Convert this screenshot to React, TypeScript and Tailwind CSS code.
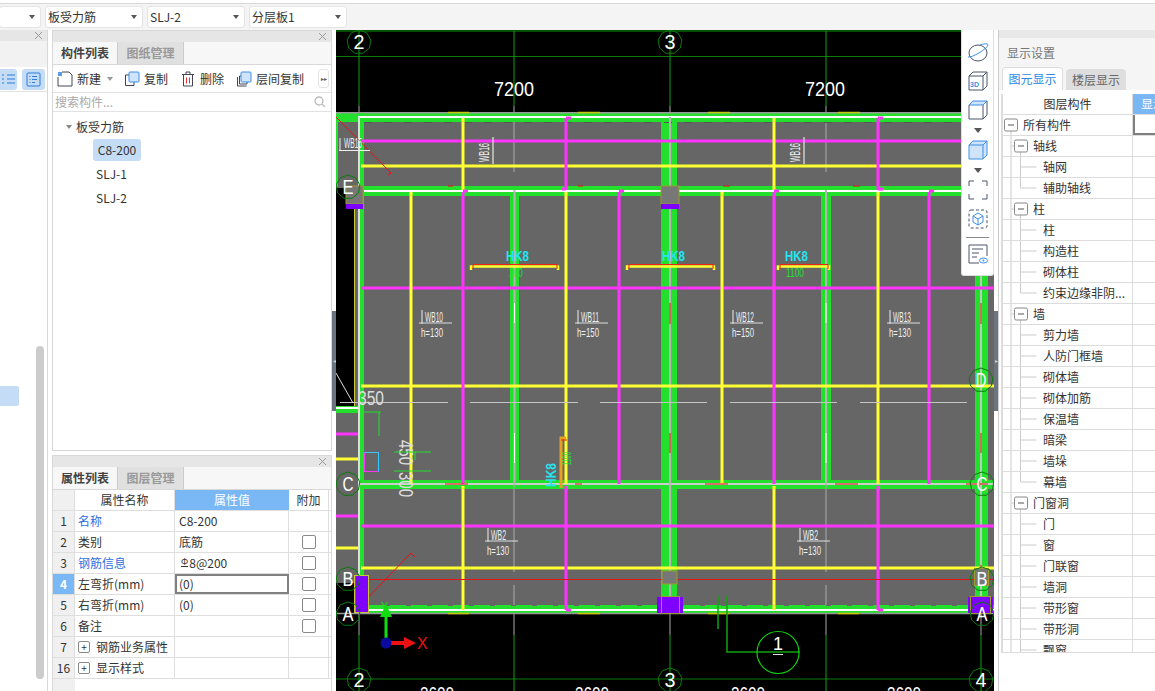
const GREEN = "#22e02c";
const AXIS = "#0b7a0b";
const PINK = "#ff33ff";
const YELLOW = "#ffff33";
const CYAN = "#22e5f0";

const sectionV = [
  { y1: 118, y2: 190, bars: [[463, YELLOW], [566, PINK], [774, YELLOW], [878, PINK]] },
  { y1: 192, y2: 484, bars: [[411, YELLOW], [463, PINK], [566, YELLOW], [619, PINK], [722, YELLOW], [774, PINK], [878, YELLOW], [929, PINK]] },
  { y1: 486, y2: 610, bars: [[463, YELLOW], [566, PINK], [774, YELLOW], [878, PINK]] },
] as const;

const hBars = [
  [141, PINK], [166, YELLOW], [288, PINK], [386, YELLOW], [526, PINK], [568, YELLOW],
] as const;

const bubbles = [
  ["2", 359, 42], ["3", 670, 42], ["E", 348, 187], ["C", 348, 484], ["B", 348, 579], ["A", 348, 614],
  ["D", 981, 380], ["C", 982, 484], ["B", 982, 579], ["A", 982, 614], ["2", 359, 680], ["3", 670, 680], ["4", 981, 680],
] as const;

const slabLabels = [
  ["WB10", "h=130", 433, 317], ["WB11", "h=150", 589, 317], ["WB12", "h=150", 744, 317], ["WB13", "h=130", 901, 317],
  ["WB2", "h=130", 499, 535], ["WB2", "h=130", 811, 535],
] as const;

function Bubble({ t, x, y }: { t: string; x: number; y: number }) {
  const pts = Array.from({ length: 9 }, (_, i) => {
    const a = (i / 9) * Math.PI * 2 - Math.PI / 2;
    return `${x + Math.cos(a) * 12},${y + Math.sin(a) * 12}`;
  }).join(" ");
  return (
    <g>
      <polygon points={pts} fill="none" stroke={AXIS} strokeWidth="1" />
      <text x={x} y={y + 7} textAnchor="middle" fontSize="20" fill="#fff" textLength="11" lengthAdjust="spacingAndGlyphs">{t}</text>
    </g>
  );
}

function SlabLabel({ a, b, x, y }: { a: string; b: string; x: number; y: number }) {
  return (
    <g fill="#eee">
      <line x1={x - 11} y1={y - 7} x2={x - 11} y2={y + 7} stroke="#eee" strokeWidth="1" />
      <line x1={x - 14} y1={y + 6} x2={x + 19} y2={y + 6} stroke="#ddd" strokeWidth="1" />
      <text x={x - 8} y={y + 5} fontSize="14" textLength={a.length > 3 ? 18 : 15} lengthAdjust="spacingAndGlyphs">{a}</text>
      <text x={x - 12} y={y + 20} fontSize="13" textLength={22} lengthAdjust="spacingAndGlyphs">{b}</text>
    </g>
  );
}

function Bracket({ x1, x2, label, num, tx }: { x1: number; x2: number; label: string; num: string; tx: number }) {
  return (
    <g>
      <path d={`M${x1} 270V266.500H${x2}V270`} fill="none" stroke={YELLOW} strokeWidth="2.500" />
      <path d={`M${x1 + 2} 269V264.500H${x2 - 1}V269`} fill="none" stroke="#ee2211" strokeWidth="1" />
      <text x={tx - 8} y={261} fontSize="14" fontWeight="700" fill={CYAN} textLength={23} lengthAdjust="spacingAndGlyphs">{label}</text>
      {num && (
        <text x={tx + 2} y={277} textAnchor="middle" fontSize="13" fill={GREEN} textLength={num.length * 4.500} lengthAdjust="spacingAndGlyphs">{num}</text>
      )}
    </g>
  );
}

function Canvas() {
  return (
    <svg width="658" height="661" viewBox="336 30 658 661" className="block font-['Liberation_Sans']">
      <rect x="336" y="30" width="658" height="661" fill="#000" />
      {/* slab fill */}
      <rect x="354" y="113" width="640" height="501" fill="#666" />
      <rect x="336" y="122" width="18" height="66" fill="#666" />
      <rect x="336" y="413" width="18" height="170" fill="#666" />

      {/* grid above and below the slab */}
      <line x1="336" y1="31" x2="994" y2="31" stroke="#0a9a0a" />
      <line x1="336" y1="56.5" x2="994" y2="56.5" stroke={AXIS} />
      <line x1="336" y1="679" x2="994" y2="679" stroke={AXIS} />
      {[359, 514, 670, 826, 981].map((x) => (
        <g key={x}>
          <line x1={x} y1="31" x2={x} y2="106" stroke="#0fa30f" />
          <line x1={x} y1="106" x2={x} y2="118" stroke="#aaa" />
          <line x1={x} y1="635" x2={x} y2="691" stroke="#0fa30f" />
          <line x1={x} y1="585" x2={x} y2="635" stroke="#aaa" />
        </g>
      ))}
      <line x1="514" y1="118" x2="514" y2="172" stroke="#aaa" />
      <line x1="826" y1="118" x2="826" y2="172" stroke="#aaa" />

      {/* walls */}
      <rect x="336" y="113" width="658" height="9" fill={GREEN} />
      <rect x="336" y="112" width="658" height="1.5" fill="#999" />
      <rect x="336" y="122" width="2" height="65" fill={GREEN} />
      <rect x="354" y="186" width="640" height="10" fill={GREEN} />
      <rect x="359" y="480" width="635" height="9" fill={GREEN} />
      <rect x="354" y="605" width="640" height="8" fill={GREEN} />
      <rect x="359" y="113" width="5" height="500" fill={GREEN} />
      <rect x="510" y="190" width="9" height="295" fill={GREEN} />
      <rect x="661" y="122" width="16" height="491" fill={GREEN} />
      <rect x="821" y="190" width="10" height="295" fill={GREEN} />
      <rect x="975" y="113" width="13" height="500" fill={GREEN} />
      <rect x="336" y="406" width="22" height="7" fill={GREEN} />
      <line x1="364" y1="122.5" x2="994" y2="122.5" stroke="#555" strokeDasharray="8 12" />
      <line x1="364" y1="605.5" x2="975" y2="605.5" stroke="#666" strokeDasharray="5 16" />

      {/* wall centre lines */}
      <line x1="358" y1="117" x2="994" y2="117" stroke="#fff" strokeWidth="2" />
      <line x1="364" y1="191" x2="994" y2="191" stroke="#fff" strokeWidth="2" />
      <line x1="336" y1="408" x2="358" y2="408" stroke="#fff" strokeWidth="2" />
      <line x1="359" y1="484" x2="994" y2="484" stroke="#ccc" strokeWidth="2" />
      <line x1="358" y1="610" x2="994" y2="610" stroke="#fff" strokeWidth="2" />
      <line x1="336" y1="613.5" x2="994" y2="613.5" stroke="#999" strokeWidth="1.5" />
      <line x1="359" y1="117" x2="359" y2="610" stroke="#ddd" strokeWidth="2" />
      <line x1="514.5" y1="190" x2="514.5" y2="484" stroke="#b5b5b5" strokeWidth="2" />
      <line x1="670" y1="117" x2="670" y2="610" stroke="#b5b5b5" strokeWidth="2" />
      <line x1="826" y1="190" x2="826" y2="484" stroke="#b5b5b5" strokeWidth="2" />
      <line x1="981" y1="113" x2="981" y2="613" stroke="#b5cdb5" strokeWidth="2" />
      <line x1="514.5" y1="303" x2="514.5" y2="323" stroke="#fff" />
      <line x1="514.5" y1="433" x2="514.5" y2="463" stroke="#fff" />
      <line x1="826" y1="303" x2="826" y2="323" stroke="#fff" />
      <line x1="826" y1="433" x2="826" y2="463" stroke="#fff" />
      <line x1="354.5" y1="190" x2="354.5" y2="406" stroke="#c8c83a" />
      <line x1="514" y1="484" x2="514" y2="572" stroke="#aaa" />
      <line x1="826" y1="484" x2="826" y2="572" stroke="#aaa" />

      {/* rebar */}
      {hBars.map(([y, c]) => (
        <line key={y} x1="361" y1={y} x2="994" y2={y} stroke={c} strokeWidth="3" />
      ))}
      {sectionV.map((s) =>
        s.bars.map(([x, c]) => (
          <line key={`${s.y1}-${x}`} x1={x} y1={s.y1} x2={x} y2={s.y2} stroke={c} strokeWidth="3" />
        )),
      )}
      <path d="M566 118h5M463 191h5M566 189h-4M619 191h5M774 191h5M878 118h5M878 189h5M929 191h5M566 610h5M878 610h5" stroke={PINK} strokeWidth="3" />
      <line x1="336" y1="434" x2="358" y2="434" stroke={PINK} strokeWidth="3" />
      <line x1="336" y1="459" x2="358" y2="459" stroke={YELLOW} strokeWidth="3" />
      <line x1="336" y1="516" x2="358" y2="516" stroke={PINK} strokeWidth="3" />
      <line x1="336" y1="548" x2="358" y2="548" stroke={YELLOW} strokeWidth="3" />

      {/* red marks */}
      <line x1="361" y1="579.5" x2="994" y2="579.5" stroke="#e81111" />
      <path d="M336 117L391 173L388 175" fill="none" stroke="#e81111" />
      <path d="M358 608L411 553L415 557" fill="none" stroke="#e81111" />
      <path d="M445 484h23M575 484h7M705 484h23M835 484h23M966 484h22M670 303v21M670 433v20M981 303v21M981 433v20M981 565v10M448 186h5M578 186h5M723 186h7M853 186h7" stroke="#e81111" />
      <path d="M448 112.5h21M578 112.5h22M708 112.5h22M838 112.5h22M448 613.5h21M578 613.5h22M708 613.5h21M838 613.5h21" stroke="#c8c800" strokeWidth="1.5" />

      {/* dashed axis through the slab */}
      <path d="M340 402.5h108M470 402.5h108M600 402.5h107M730 402.5h107M860 402.5h107" stroke="#c4c4c4" />
      <path d="M336 373L353 403" stroke="#ddd" />

      {/* columns */}
      <rect x="346" y="186" width="17" height="18" fill="#777" stroke="#9a9a30" />
      <rect x="346" y="204" width="17" height="5" fill="#8000ff" />
      <rect x="661" y="186" width="18" height="18" fill="#777" stroke="#9a9a30" />
      <rect x="661" y="204" width="18" height="5" fill="#8000ff" />
      <rect x="662" y="571" width="15" height="13" fill="#777" stroke="#9a9a30" />
      <rect x="974.5" y="568.500" width="14" height="17" fill="#777" stroke="#9a9a30" />
      <rect x="657" y="597" width="26" height="16" fill="#8000ff" />
      <rect x="661.500" y="596.500" width="18" height="17" fill="none" stroke="#9a9a30" />
      <rect x="968" y="597" width="25" height="16" fill="#8000ff" />
      <rect x="970.500" y="596.500" width="20" height="17" fill="none" stroke="#9a9a30" />
      <rect x="356" y="576" width="12" height="37" fill="#8000ff" />
      <rect x="354.5" y="575.5" width="14" height="37" fill="none" stroke="#c8c83a" />
      <rect x="364.5" y="452.5" width="14" height="19" fill="#666" stroke="#ff33ff" />
      <path d="M364.5 452.5h14v19" fill="none" stroke="#33ccff" />

      {/* text on the slab */}
      {slabLabels.map(([a, b, x, y]) => (
        <SlabLabel key={`${a}${x}`} a={a} b={b} x={x} y={y} />
      ))}
      <g fill="#eee">
        <path d="M340 138v12M339 150.500h31" stroke="#eee" />
        <text x="344" y="148" fontSize="14" textLength="18" lengthAdjust="spacingAndGlyphs">WB15</text>
        <path d="M493 137v27" stroke="#fff" />
        <text transform="translate(489 162) rotate(-90)" fontSize="14" textLength="19" lengthAdjust="spacingAndGlyphs">WB16</text>
        <path d="M804 137v27" stroke="#fff" />
        <text transform="translate(800 162) rotate(-90)" fontSize="14" textLength="19" lengthAdjust="spacingAndGlyphs">WB16</text>
      </g>
      <Bracket x1={471} x2={558} label="HK8" num="200" tx={514} />
      <Bracket x1={627} x2={714} label="HK8" num="" tx={670} />
      <Bracket x1={778} x2={829} label="HK8" num="1100" tx={793} />
      <path d="M561 488V438H566" fill="none" stroke="#e8a020" strokeWidth="3" />
      <path d="M561 440H567" stroke="#ee2211" />
      <text transform="translate(571 465) rotate(-90)" fontSize="13" fill={GREEN} textLength="13" lengthAdjust="spacingAndGlyphs">1100</text>
      <text transform="translate(556 487) rotate(-90)" fontSize="14" fontWeight="700" fill={CYAN} textLength="24" lengthAdjust="spacingAndGlyphs">HK8</text>

      <text x="358" y="405" fontSize="20" fill="#ddd" textLength="26" lengthAdjust="spacingAndGlyphs">350</text>
      <text transform="translate(399 440) rotate(90)" fontSize="20" fill="#ddd" textLength="25" lengthAdjust="spacingAndGlyphs">450</text>
      <text transform="translate(399 472) rotate(90)" fontSize="20" fill="#ddd" textLength="25" lengthAdjust="spacingAndGlyphs">300</text>
      <path d="M363 412h18M379 412v24M394 452h37M394 471h37M415 452v8" stroke={GREEN} />

      {/* dimensions */}
      <text x="514" y="96" textAnchor="middle" fontSize="20" fill="#fff" textLength="40" lengthAdjust="spacingAndGlyphs">7200</text>
      <text x="825" y="96" textAnchor="middle" fontSize="20" fill="#fff" textLength="40" lengthAdjust="spacingAndGlyphs">7200</text>
      {[437, 592, 748, 904].map((x) => (
        <text key={x} x={x} y="701" textAnchor="middle" fontSize="20" fill="#fff" textLength="34" lengthAdjust="spacingAndGlyphs">3600</text>
      ))}

      {bubbles.map(([t, x, y], i) => (
        <Bubble key={i} t={t} x={x} y={y} />
      ))}

      {/* section mark */}
      <path d="M718 596v33M727 596v56H800" fill="none" stroke="#0fa30f" strokeWidth="1.5" />
      <circle cx="778" cy="652.5" r="21" fill="none" stroke="#0fd00f" strokeWidth="1.2" />
      <text x="778" y="650" textAnchor="middle" fontSize="18" fill="#fff">1</text>
      <line x1="773" y1="654.5" x2="783" y2="654.5" stroke="#ddd" />

      {/* UCS */}
      <rect x="384.5" y="616" width="3" height="22" fill="#11dd11" />
      <path d="M380 617L386 604L392 617Z" fill="#11dd11" />
      <rect x="390" y="641" width="16" height="4" fill="#ee1111" />
      <path d="M404 637L416 643L404 649Z" fill="#ee1111" />
      <circle cx="386" cy="643" r="5.5" fill="#0a0aa0" />
      <text x="417" y="649" fontSize="16" fill="#ee1111">X</text>
      <text x="381" y="610" fontSize="11" fill="#11dd11">Y</text>
    </svg>
  );
}

function Close() {
  return (
    <svg width="9" height="9" viewBox="0 0 9 9" stroke="#999" className="mr-[4px]">
      <path d="M1 1l7 7M8 1L1 8" />
    </svg>
  );
}

function PanelHead() {
  return (
    <div className="flex h-[11px] shrink-0 items-center justify-end bg-[#e6e6e6]">
      <Close />
    </div>
  );
}

function Tabs({ a, b }: { a: string; b: string }) {
  return (
    <div className="flex h-[23px] shrink-0 border-b border-[#d8d8d8] bg-[#f7f7f7]">
      <div className="flex w-[65px] items-center justify-center border-r border-[#ccc] text-[12px] font-bold text-[#444]">{a}</div>
      <div className="flex w-[66px] items-center justify-center border-r border-[#ccc] bg-[#e0e0e0] text-[12px] font-bold text-[#999]">{b}</div>
    </div>
  );
}

function Select({ w, text }: { w: string; text?: string }) {
  return (
    <div className={`flex h-[22px] items-center justify-between rounded-[3px] border border-[#e4e4e4] bg-white pl-[2px] pr-[5px] text-[12px] text-[#333] ${w}`}>
      <span>{text}</span>
      <span className="h-0 w-0 border-x-[3px] border-t-[4px] border-x-transparent border-t-[#555]" />
    </div>
  );
}

function CopyIcon({ stacked }: { stacked?: boolean }) {
  return (
    <svg width="16" height="16" viewBox="0 0 16 16" fill="none">
      {stacked && <path d="M1.500 6v9h9" stroke="#445" />}
      <path d={stacked ? "M5 5H3.500v8H11v-2" : "M5 4H1.500v10.500H10V11"} stroke="#445" />
      <rect x="5" y="1" width="10" height="10" rx="1" fill="#cfe3fa" stroke="#3d8fe6" />
    </svg>
  );
}

function ToolBar() {
  return (
    <div className="flex h-[28px] shrink-0 items-center whitespace-nowrap border-b border-[#e2e2e2] bg-white pl-[4px] text-[12px] text-[#333]">
      <svg width="16" height="16" viewBox="0 0 16 16" fill="none" className="shrink-0">
        <path d="M1 6v9h14V4l-3-3H5" stroke="#445" />
        <rect x="1" y="1" width="4" height="4" fill="#5a9be6" />
      </svg>
      <span className="ml-[4px]">新建</span>
      <span className="ml-[6px] h-0 w-0 border-x-[3px] border-t-[4px] border-x-transparent border-t-[#999]" />
      <span className="ml-[11px] flex shrink-0"><CopyIcon /></span>
      <span className="ml-[4px]">复制</span>
      <span className="ml-[13px] flex shrink-0">
        <svg width="14" height="16" viewBox="0 0 14 16" fill="none" stroke="#445">
          <path d="M1 3.500h12M5 3V1h4v2M2.500 3.500V15h9V3.500" />
          <path d="M5.500 6.500v6M8.500 6.500v6" stroke="#e33" />
        </svg>
      </span>
      <span className="ml-[5px]">删除</span>
      <span className="ml-[12px] flex shrink-0"><CopyIcon stacked /></span>
      <span className="ml-[4px]">层间复制</span>
      <span className="ml-[14px] flex h-[19px] w-[11px] shrink-0 items-center justify-center rounded-[3px] border border-[#e4e4e4] text-[6px] text-[#555]">▸▸</span>
    </div>
  );
}

function ListPanel() {
  return (
    <div className="flex h-[421px] flex-col border border-[#d8d8d8] bg-white">
      <PanelHead />
      <Tabs a="构件列表" b="图纸管理" />
      <ToolBar />
      <div className="flex h-[19px] shrink-0 items-center justify-between border-b border-[#e2e2e2] pl-[2px] pr-[5px] text-[12px] text-[#aaa]">
        <span>搜索构件...</span>
        <svg width="12" height="12" viewBox="0 0 12 12" fill="none" stroke="#bbb" strokeWidth="1.300">
          <circle cx="5" cy="5" r="4" />
          <path d="M8 8l3 3" />
        </svg>
      </div>
      <div className="pt-[2px] text-[12px] text-[#333]">
        <div className="mt-px flex h-[23px] items-center pl-[13px]">
          <span className="mr-[4px] h-0 w-0 border-x-[3px] border-t-[4px] border-x-transparent border-t-[#888]" />
          <span>板受力筋</span>
        </div>
        <div className="flex h-[24px] items-center pl-[40px]">
          <span className="flex h-[22px] w-[48px] items-center justify-center rounded-[3px] bg-[#c4dcf5]">C8-200</span>
        </div>
        <div className="flex h-[24px] items-center pl-[43px]">SLJ-1</div>
        <div className="flex h-[24px] items-center pl-[43px]">SLJ-2</div>
      </div>
    </div>
  );
}

const propRows = [
  { n: "1", name: "名称", value: "C8-200", blue: true, check: false },
  { n: "2", name: "类别", value: "底筋", check: true },
  { n: "3", name: "钢筋信息", value: "8@200", blue: true, check: true, steel: true },
  { n: "4", name: "左弯折(mm)", value: "(0)", check: true, active: true },
  { n: "5", name: "右弯折(mm)", value: "(0)", check: true },
  { n: "6", name: "备注", value: "", check: true },
  { n: "7", name: "钢筋业务属性", value: "", plus: true, check: false },
  { n: "16", name: "显示样式", value: "", plus: true, check: false },
];

function PropPanel() {
  return (
    <div className="flex flex-1 flex-col border-x border-t border-[#d8d8d8] bg-white">
      <PanelHead />
      <Tabs a="属性列表" b="图层管理" />
      <div className="flex h-[21px] shrink-0 border-b border-[#dedede] text-[12px]">
        <div className="w-[22px] border-r border-[#dedede] bg-[#f0f0f0]" />
        <div className="flex w-[100px] items-center justify-center border-r border-[#dedede] text-[#333]">属性名称</div>
        <div className="flex w-[114px] items-center justify-center bg-[#7ab8f5] text-white">属性值</div>
        <div className="flex w-[40px] items-center justify-center border-r border-[#dedede] text-[#333]">附加</div>
      </div>
      {propRows.map((r) => (
        <div key={r.n} className="flex h-[21px] shrink-0 border-b border-[#dedede] text-[12px] text-[#333]">
          <div className={`flex w-[22px] items-center justify-center border-r border-[#dedede] ${r.active ? "bg-[#7ab8f5] font-bold text-white" : "bg-[#f0f0f0]"}`}>{r.n}</div>
          <div className={`flex w-[100px] items-center border-r border-[#dedede] pl-[3px] ${r.blue ? "text-[#2f6fe0]" : ""}`}>
            {r.plus && (
              <span className="mr-[6px] flex h-[12px] w-[12px] items-center justify-center rounded-[2px] border border-[#888] text-[10px] leading-none">+</span>
            )}
            {r.name}
          </div>
          <div className={`flex w-[114px] items-center ${r.active ? "border-2 border-[#808080] pl-[2px]" : "border-r border-[#dedede] pl-[4px]"}`}>
            {r.steel && <span className="mb-[3px] ml-[2px] mr-px border-b border-[#333] text-[9px] leading-[9px]">Φ</span>}
            {r.value}
          </div>
          <div className="flex w-[40px] items-center justify-center border-r border-[#dedede]">
            {r.check && <span className="h-[14px] w-[14px] rounded-[2px] border border-[#888] bg-white" />}
          </div>
        </div>
      ))}
      <div className="flex flex-1">
        <div className="w-[22px] bg-[#f0f0f0]" />
      </div>
    </div>
  );
}

type Node = { t: string; level: 0 | 1 | 2; last?: boolean };

const layerRows: Node[] = [
  { t: "所有构件", level: 0 },
  { t: "轴线", level: 1 }, { t: "轴网", level: 2 }, { t: "辅助轴线", level: 2, last: true },
  { t: "柱", level: 1 }, { t: "柱", level: 2 }, { t: "构造柱", level: 2 }, { t: "砌体柱", level: 2 }, { t: "约束边缘非阴...", level: 2, last: true },
  { t: "墙", level: 1 }, { t: "剪力墙", level: 2 }, { t: "人防门框墙", level: 2 }, { t: "砌体墙", level: 2 }, { t: "砌体加筋", level: 2 },
  { t: "保温墙", level: 2 }, { t: "暗梁", level: 2 }, { t: "墙垛", level: 2 }, { t: "幕墙", level: 2, last: true },
  { t: "门窗洞", level: 1 }, { t: "门", level: 2 }, { t: "窗", level: 2 }, { t: "门联窗", level: 2 }, { t: "墙洞", level: 2 }, { t: "带形窗", level: 2 }, { t: "带形洞", level: 2 }, { t: "飘窗", level: 2 },
];

function TreeMark({ node }: { node: Node }) {
  const w = node.level === 0 ? 20 : node.level === 1 ? 30 : 40;
  return (
    <svg width={w} height="20" viewBox={`0 0 ${w} 20`} fill="none" className="shrink-0">
      {node.level === 0 && (
        <g>
          <path d="M8 16v4" stroke="#ccc" />
          <rect x="1.500" y="4" width="13" height="12" rx="1.500" stroke="#888" />
          <path d="M5 10h6" stroke="#555" />
        </g>
      )}
      {node.level === 1 && (
        <g>
          <path d="M8 0v20M8 10h3M17.500 16v4" stroke="#ccc" />
          <rect x="11.500" y="4" width="13" height="12" rx="1.500" stroke="#888" />
          <path d="M15 10h6" stroke="#555" />
        </g>
      )}
      {node.level === 2 && <path d={`M8 0v20M17.500 0v${node.last ? 10 : 20}M17.500 10h16`} stroke="#ccc" />}
    </svg>
  );
}

function DisplayPanel() {
  return (
    <div className="flex w-[157px] flex-col overflow-hidden border-l border-[#ccc] bg-white">
      <div className="h-[8px] shrink-0 bg-[#e8e8e8]" />
      <div className="flex h-[30px] shrink-0 items-center bg-[#f5f5f5] pl-[8px] text-[12px] text-[#777]">显示设置</div>
      <div className="flex h-[22px] shrink-0 items-end bg-[#f5f5f5] pl-[3px]">
        <div className="flex h-[23px] w-[61px] items-center justify-center rounded-t-[4px] border border-b-0 border-[#ddd] bg-white text-[12px] text-[#2a8ae6]">图元显示</div>
        <div className="ml-[3px] flex h-[21px] w-[60px] items-center justify-center rounded-t-[4px] bg-[#dedede] text-[12px] text-[#666]">楼层显示</div>
      </div>
      <div className="h-[4px] shrink-0" />
      <div className="ml-[2px] h-[559px] overflow-hidden border-b border-l-2 border-[#dcdcdc] text-[12px] text-[#333]">
        <div className="flex h-[21px] border-b border-[#dcdcdc]">
          <div className="flex w-[130px] shrink-0 items-center justify-center border-r border-[#dcdcdc]">图层构件</div>
          <div className="w-[30px] shrink-0 overflow-hidden whitespace-nowrap bg-[#7ab8f5] pl-[8px] leading-[20px] text-white">显示</div>
        </div>
        {layerRows.map((r, i) => (
          <div key={i} className="flex h-[21px] border-b border-[#dcdcdc]">
            <div className="flex w-[130px] shrink-0 items-center overflow-hidden whitespace-nowrap border-r border-[#dcdcdc]">
              <TreeMark node={r} />
              {r.t}
            </div>
            <div className={`w-[30px] shrink-0 ${i === 0 ? "border-b-2 border-l-2 border-[#808080]" : ""}`} />
          </div>
        ))}
      </div>
    </div>
  );
}

function ViewTools() {
  const frame = "#4a5568";
  const blue = "#3d8fe6";
  return (
    <div className="absolute right-0 top-0 flex h-[246px] w-[33px] flex-col items-center rounded-b-[3px] border border-t-0 border-[#ddd] bg-white pt-[13px]">
      <svg width="22" height="20" viewBox="0 0 22 20" fill="none">
        <ellipse cx="11" cy="10" rx="9" ry="8" stroke={frame} />
        <path d="M1 14C5 15 20 6 21 2C21 0 16 1 13 2" stroke={blue} />
      </svg>
      <svg width="20" height="20" viewBox="0 0 20 20" fill="none" className="mt-[8px]">
        <path d="M1 5L5 1H19V15L15 19H1ZM1 5H15V19M15 5L19 1" stroke={frame} />
        <text x="2" y="16" fontSize="7" fontWeight="700" fill={blue} className="font-['Liberation_Sans']">3D</text>
      </svg>
      <svg width="20" height="20" viewBox="0 0 20 20" fill="none" className="mt-[9px]">
        <path d="M1 5L5 1H19L15 5Z" fill="#cfe3fa" stroke={blue} />
        <path d="M1 5V19H15V5M15 19L19 15V1" stroke={frame} />
      </svg>
      <span className="mt-[8px] h-0 w-0 border-x-[4px] border-t-[5px] border-x-transparent border-t-[#555]" />
      <svg width="20" height="20" viewBox="0 0 20 20" className="mt-[7px]">
        <path d="M1 5L5 1H19V15L15 19H1Z" fill="#cfe3fa" stroke={blue} />
        <path d="M1 5H15V19M15 5L19 1" fill="none" stroke={blue} />
      </svg>
      <span className="mt-[8px] h-0 w-0 border-x-[4px] border-t-[5px] border-x-transparent border-t-[#555]" />
      <svg width="20" height="20" viewBox="0 0 20 20" fill="none" stroke={frame} className="mt-[7px]">
        <path d="M1 6V1H6M14 1H19V6M19 14V19H14M6 19H1V14" />
      </svg>
      <svg width="20" height="20" viewBox="0 0 20 20" fill="none" className="mt-[9px]">
        <rect x="1" y="1" width="18" height="18" rx="2" stroke={frame} strokeDasharray="3 2" />
        <path d="M10 4L15 7V13L10 16L5 13V7ZM5 7L10 10L15 7M10 10V16" stroke={blue} />
      </svg>
      <div className="mt-[8px] h-px w-[23px] bg-[#888]" />
      <svg width="20" height="20" viewBox="0 0 20 20" fill="none" className="mt-[6px]">
        <path d="M11 19H1V1H19V12" stroke={frame} />
        <path d="M4 5h11M4 9h7M4 13h5" stroke={frame} />
        <ellipse cx="15.500" cy="16.500" rx="4" ry="2.500" stroke={blue} />
        <circle cx="15.500" cy="16.500" r="1" fill={blue} />
      </svg>
    </div>
  );
}

export default function App() {
  return (
    <div className="flex h-[691px] w-[1155px] flex-col overflow-hidden bg-white font-['Noto_Sans_CJK_SC',sans-serif]">
      {/* top selector bar */}
      <div className="h-[3px] bg-white" />
      <div className="flex h-[27px] items-start gap-[4px] border-t border-[#d8d8d8] bg-[#f4f4f4] pt-[2px]">
        <Select w="w-[42px] -ml-px" />
        <Select w="w-[98px]" text="板受力筋" />
        <Select w="w-[98px]" text="SLJ-2" />
        <Select w="w-[98px]" text="分层板1" />
      </div>

      <div className="flex min-h-0 flex-1">
        {/* cut off far-left panel */}
        <div className="flex w-[48px] flex-col border-r border-[#d8d8d8] bg-white">
          <PanelHead />
          <div className="h-[26px] bg-[#f2f2f2]" />
          <div className="flex h-[25px] items-center border-b border-[#e2e2e2] bg-white">
            <div className="flex h-[21px] w-[17px] items-center justify-end rounded-r-[3px] bg-[#c4dcf5] pr-[2px]">
              <svg width="13" height="12" viewBox="0 0 13 12" stroke="#2a7de1" fill="none"><path d="M0 2h2M5 2h8M0 6h2M5 6h8M0 10h2M5 10h8" /></svg>
            </div>
            <div className="ml-[5px] flex h-[21px] w-[23px] items-center justify-center rounded-[3px] bg-[#c4dcf5]">
              <svg width="15" height="15" viewBox="0 0 15 15" stroke="#2a7de1" fill="none"><rect x="1" y="1" width="13" height="13" rx="1" /><path d="M3.500 4.500h1M6 4.500h5M3.500 7.500h1M6 7.500h5M3.500 10.500h1M6 10.500h3" /></svg>
            </div>
          </div>
          <div className="flex min-h-0 flex-1 justify-between">
            <div className="mt-[294px] h-[20px] w-[19px] rounded-r-[2px] bg-[#c4dcf5]" />
            <div className="mr-[3px] mt-[254px] h-[333px] w-[8px] rounded-[4px] bg-[#cccccc]" />
          </div>
        </div>

        <div className="w-[4px] bg-white" />

        {/* component list and properties */}
        <div className="flex w-[280px] flex-col">
          <ListPanel />
          <div className="h-[4px] bg-white" />
          <PropPanel />
        </div>

        {/* collapse handle */}
        <div className="flex w-[4px] items-center bg-white">
          <div className="flex h-[100px] w-[4px] items-center justify-center bg-[#6b7580] text-[6px] text-[#ccc]">◂</div>
        </div>

        <div className="relative w-[658px]">
          <Canvas />
          <ViewTools />
        </div>

        <div className="flex w-[4px] items-center bg-white">
          <div className="flex h-[100px] w-[4px] items-center justify-center bg-[#6b7580] text-[6px] text-[#ccc]">▸</div>
        </div>

        <DisplayPanel />
      </div>
    </div>
  );
}
